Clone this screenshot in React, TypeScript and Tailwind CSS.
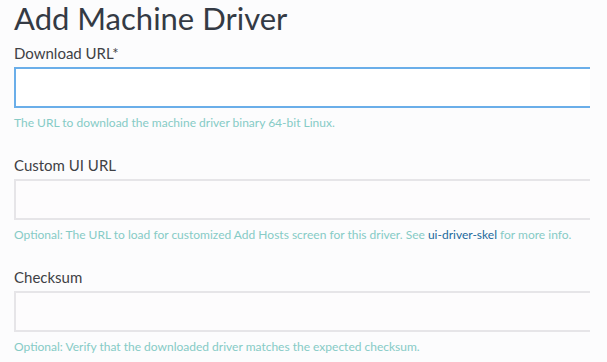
import { FunctionComponent, ReactNode } from "react";

type FieldProps = {
  label: string;
  help: ReactNode;
  focused?: boolean;
};

const Field: FunctionComponent<FieldProps> = ({ label, help, focused }) => {
  return (
    <div className="pt-[8px]">
      <label className="block text-[15px] leading-[18px] text-[#3f4145] mb-[5px]">
        {label}
      </label>
      <div className="w-[576px] overflow-hidden">
        <input
          type="text"
          className={
            focused
              ? "block w-full min-w-0 h-[41px] bg-white border-2 border-r-0 border-[#6aaee9] shadow-[0_0_4px_rgba(106,174,233,0.35)] outline-none"
              : "block w-full min-w-0 h-[41px] bg-[#fdfcfd] border-2 border-r-0 border-[#e6e5e8] outline-none"
          }
        />
      </div>
      <p className="mt-[8px] text-[12px] leading-[14px] text-[#86cbc6]">{help}</p>
    </div>
  );
};

const App: FunctionComponent = () => {
  return (
    <div className="w-[607px] h-[362px] overflow-hidden bg-[#fcfcfd] font-['Lato',sans-serif]">
      <div className="pl-[14px]">
        <h1 className="text-[31px] leading-[36px] font-normal text-[#343a44]">
          Add Machine Driver
        </h1>
        <div className="flex flex-col gap-[18px]">
          <Field
            label="Download URL*"
            focused
            help="The URL to download the machine driver binary 64-bit Linux."
          />
          <Field
            label="Custom UI URL"
            help={
              <>
                Optional: The URL to load for customized Add Hosts screen for this driver. See{" "}
                <a className="text-[#1d6a9c]">ui-driver-skel</a> for more info.
              </>
            }
          />
          <Field
            label="Checksum"
            help="Optional: Verify that the downloaded driver matches the expected checksum."
          />
        </div>
      </div>
    </div>
  );
};

export default App;
